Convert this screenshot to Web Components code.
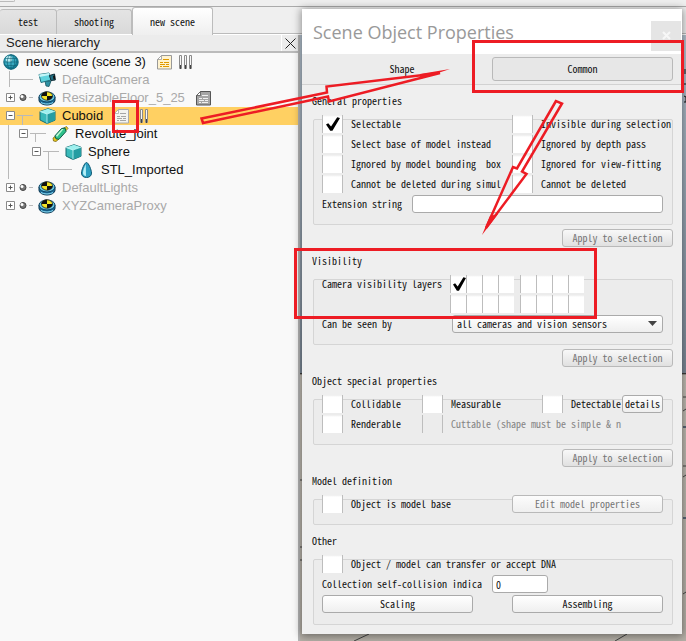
<!DOCTYPE html>
<html lang="en">
<head>
<meta charset="utf-8">
<title>Scene Object Properties</title>
<style>
  html, body { margin: 0; min-height: 100%; }
  body { font-family: "Liberation Sans", Arial, sans-serif; font-size: 13px; color: #111; overflow: hidden;
    --mono: "Noto Sans Mono CJK SC", "Liberation Mono", monospace; --mono-size: 10px; }
</style>
</head>
<body>
<scene-app></scene-app>
<script>
const define = (name, html, setup) => customElements.define(name, class extends HTMLElement {
  connectedCallback() {
    if (this.shadowRoot) return;
    const root = this.attachShadow({ mode: 'open' });
    const t = document.createElement('template');
    t.innerHTML = typeof html === 'function' ? html(this) : html;
    root.append(t.content.cloneNode(true));
    if (setup) setup(this, root);
  }
});

/* ---------- icons ---------- */
const ICONS = {
  globe: [16, 16, `<circle cx="8" cy="8" r="7.5" fill="#177d94"/><circle cx="7.2" cy="7" r="6" fill="#39a9bf"/><circle cx="6" cy="5" r="3.2" fill="#c5f2f6" opacity=".9"/><g fill="none" stroke="#0f5f74" stroke-width=".6"><circle cx="8" cy="8" r="7.3"/><path d="M1 8h14M2.2 4.5h11.6M2.2 11.5h11.6M8 .7v14.6"/><ellipse cx="8" cy="8" rx="3.7" ry="7.3"/></g>`],
  camera: [18, 16, `<path d="M7 9l6 0-2 5.500-3-.5z" fill="#2f91a3" stroke="#16545f" stroke-width=".8"/><path d="M1 2.500L11 1l2 7-10 2.500z" fill="#5fd3dd" stroke="#1d6f7c"/><path d="M1 2.500l10-1.500.5 2L1.500 5z" fill="#c3f6f8"/><path d="M11.500 3.500l5-1.500 .8 6-4.300.5z" fill="#226f83" stroke="#102c36"/><path d="M15 4l2-.8.3 4-1.800.3z" fill="#111"/>`],
  model: [18, 16, `<path d="M1 7v3c0 2.800 3.600 5 8 5s8-2.200 8-5V7z" fill="#1b6f9c" stroke="#0a344f"/><ellipse cx="9" cy="7" rx="8" ry="5" fill="#62c3e2" stroke="#0d405f"/><ellipse cx="9" cy="6" rx="5.500" ry="4.200" fill="#f4e526" stroke="#222" stroke-width=".8"/><path d="M9 6V1.800C6 1.800 3.600 3.500 3.500 6zM9 6v4.200c3 0 5.400-1.700 5.500-4.200z" fill="#111"/><path d="M3 12.500c3 2 9 2 12 0" fill="none" stroke="#8fdcf2"/>`],
  cube: [17, 16, `<path d="M1 3.500L9 .7l7 2.500v9L8 15.500 1 12z" fill="#39b9b9" stroke="#176a70"/><path d="M1 3.500L9 .7l7 2.500L8 6z" fill="#9df0ee"/><path d="M8 6l8-2.800v9L8 15.500z" fill="#259da2"/><path d="M1 3.500L8 6l8-2.800M8 6v9.500" fill="none" stroke="#d7ffff" stroke-width=".7"/>`],
  joint: [17, 16, `<path d="M1 12l3-2 3 3-3 2.500-2.500-.5z" fill="#e7c81f" stroke="#6d5a08" stroke-width=".7"/><path d="M11 2.500L14.500 .5 16 2.500 13.500 5z" fill="#e7d12b" stroke="#6d5a08" stroke-width=".7"/><path d="M2.800 10L9.500 2.500l3.500-.5 1 3.500L7 13.300l-3-.5z" fill="#2ec08a" stroke="#0e5c48"/><path d="M4 9.500L10 3l1.500 0-6.500 8z" fill="#bff7d6"/>`],
  drop: [17, 16, `<path d="M8.500.5C10.500.5 13.500 8 13.500 11c0 3-2.200 4.500-5 4.500s-5-1.500-5-4.500C3.500 8 6.500.5 8.500.5z" fill="#2c9fc0" stroke="#105a74"/><path d="M7.800 2C6.500 5 5 8 5 11c0 2 1.500 3 3 3z" fill="#b5f0f8"/>`],
  sliders: [15, 15, `<g fill="#f7f7f7" stroke="#8b8b8b"><path d="M1.500.5h2v13h-2zM6.500.5h2v13h-2zM11.500.5h2v13h-2z"/></g><path d="M2 10h1v4H2zM7 10h1v4H7zM12 10h1v4h-1z" fill="#444"/>`],
  sliders2: [15, 15, `<g fill="#f7f7f7" stroke="#8b8b8b"><path d="M5.500.5h2v13h-2zM10.500.5h2v13h-2z"/></g><path d="M6 10h1v4H6zM11 10h1v4h-1z" fill="#444"/><path d="M1 10h2v4H1z" fill="#888"/>`]
};
const doc = (bg, ink, edge) => [15, 15, `<path d="M4.500.5h10v13.500H.5V4.500z" fill="${bg}" stroke="${edge}"/><path d="M.5 4.500h4v-4z" fill="#fff" stroke="${edge}" stroke-width=".8"/><path d="M6 4.500h6M3 7.500h3M7 7.500h5M3 9.500h5M9 9.500h3M3 11.500h2M6 11.500h6" stroke="${ink}" fill="none"/>`];
ICONS.script = doc('#fff3cf', '#e09a00', '#999');
ICONS.scriptGrey = doc('#a5a5a5', '#f0f0f0', '#555');
ICONS.scriptLight = doc('#f3f3f0', '#a5a5a5', '#aaa');

define('ui-icon', el => {
  const [w, h, body] = ICONS[el.getAttribute('name')];
  return `<style>:host{display:inline-flex;flex:none} svg{display:block}</style>
  <svg width="${w}" height="${h}" viewBox="0 0 ${w} ${h}" aria-hidden="true">${body}</svg>`;
});

/* ---------- tree ---------- */
/* guide: connector lines and toggles of the row; indent: their total width. */
define('tree-row', el => `
<style>
  :host { display: flex; align-items: center; height: 18px; white-space: nowrap; }
  :host([selected]) { background: #ffd062; }
  :host([dim]) .name { color: #a9a9a9; }
  svg { display: block; flex: none; overflow: visible; }
  .icon { display: flex; justify-content: center; width: 18px; }
  .name { margin-left: 6px; line-height: 18px; }
  .extra { display: flex; align-items: center; gap: 6px; margin-left: 11px; }
</style>
<svg width="${el.getAttribute('indent')}" height="18" fill="none" stroke="#b9b9b9" aria-hidden="true">${guide(el.getAttribute('guide') || '')}</svg>
<span class="icon"><slot name="icon"></slot></span>
<span class="name"><slot></slot></span>
<span class="extra"><slot name="extra"></slot></span>`);

function guide(spec) {
  return spec.split(' ').filter(Boolean).map(s => {
    const [k, ...n] = s.split(',');
    if (k === 'L') return `<path d="M${n[0]} ${n[1]}L${n[2]} ${n[3]}"/>`;
    const x = +n[0];
    if (k === 'B') return `<circle cx="${x}" cy="8.500" r="3" fill="#777" stroke="#444"/><circle cx="${x - 1}" cy="7.500" r="1.500" fill="#fff" stroke="none"/>`;
    return `<path d="M${x}.5 4.500h8v8h-8z" fill="#fff" stroke="#8a8a8a"/><path d="M${x + 2}.5 8.500h4${k === 'P' ? `M${x + 4}.5 6.500v4` : ''}" stroke="#555"/>`;
  }).join('');
}

define('scene-hierarchy', `
<style>
  :host { display: flex; flex-direction: column; width: 298px; flex: none; background: #f9f9f9; }
  header { display: flex; height: 16px; align-items: center; justify-content: space-between; background: #ececec; border-bottom: 2px solid #bbb; color: #222; }
  h2 { margin: 0 0 0 6px; font-size: 13px; font-weight: 400; line-height: 16px; }
  button { width: 17px; height: 16px; border: 0; border-left: 1px solid #fff; padding: 0; background: #ececec; }
  button svg { display: block; margin: 0 auto; }
</style>
<header><h2>Scene hierarchy</h2><button aria-label="Close hierarchy"><svg width="11" height="11" stroke="#222"><path d="M.5.5l10 10M10.500.5l-10 10"/></svg></button></header>
<div>
<tree-row indent="2"><ui-icon slot="icon" name="globe"></ui-icon>new scene (scene 3)<ui-icon slot="extra" name="script"></ui-icon><ui-icon slot="extra" name="sliders"></ui-icon></tree-row>
<tree-row dim indent="38" guide="L,9.5,0,9.5,16 L,9.5,8.5,33,8.5"><ui-icon slot="icon" name="camera"></ui-icon>DefaultCamera</tree-row>
<tree-row dim indent="38" guide="P,6 B,23 L,29,8.5,33,8.5"><ui-icon slot="icon" name="model"></ui-icon>ResizableFloor_5_25<ui-icon slot="extra" name="scriptGrey"></ui-icon></tree-row>
<tree-row selected indent="38" guide="M,6 L,17,8.5,33,8.5 L,22.5,8.5,22.5,18"><ui-icon slot="icon" name="cube"></ui-icon>Cuboid<ui-icon slot="extra" name="scriptLight"></ui-icon><ui-icon slot="extra" name="sliders2"></ui-icon></tree-row>
<tree-row indent="51" guide="L,8.5,0,8.5,18 M,19 L,30,8.5,46,8.5 L,35.5,8.5,35.5,17"><ui-icon slot="icon" name="joint"></ui-icon>Revolute_joint</tree-row>
<tree-row indent="64" guide="L,8.5,0,8.5,18 M,32 L,43,8.5,59,8.5 L,48.5,8.5,48.5,18"><ui-icon slot="icon" name="cube"></ui-icon>Sphere</tree-row>
<tree-row indent="77" guide="L,8.5,0,8.5,18 L,48.5,0,48.5,8.5 L,48.5,8.5,72,8.5"><ui-icon slot="icon" name="drop"></ui-icon>STL_Imported</tree-row>
<tree-row dim indent="38" guide="P,6 B,23 L,29,8.5,33,8.5"><ui-icon slot="icon" name="model"></ui-icon>DefaultLights</tree-row>
<tree-row dim indent="38" guide="P,6 B,23 L,29,8.5,33,8.5"><ui-icon slot="icon" name="model"></ui-icon>XYZCameraProxy</tree-row>
</div>`);

define('scene-tabs', `
<style>
  :host { display: flex; align-items: flex-end; height: 27px; border-bottom: 1px solid #fff; }
  button { box-sizing: border-box; height: 25px; padding: 0; border: 1px solid #bcbcbc; border-width: 1px 1px 0 0; border-radius: 3px 3px 0 0; background: linear-gradient(#e4e4e4, #d9d9d9); font: var(--mono-size)/20px var(--mono); color: #111; }
  .a { width: 57px; } .b { width: 75px; }
  .c { width: 81px; height: 28px; margin-bottom: -1px; border-width: 1px 1px 0; background: linear-gradient(#fff, #efefef); }
  .rest { flex: 1; border-bottom: 1px solid #bbb; }
</style>
<button class="a">test</button><button class="b">shooting</button><button class="c">new scene</button><span class="rest"></span>`);

/* ---------- form parts ---------- */
const CHECK = `
  input { appearance: none; box-sizing: border-box; margin: 0; flex: none; width: 21px; height: 18px; border: 1px solid #bdbdbd; border-width: 0 1px; background: linear-gradient(#ececec, #fff 2px); }
  input:disabled { background: #ececec; }
  input:checked::before { content: ""; display: block; width: 14px; height: 14px; margin: 2px 0 0 3px; background: #000;
    clip-path: polygon(0 54%, 16% 44%, 36% 68%, 80% 2%, 100% 8%, 46% 98%, 30% 98%); }`;

define('check-field', el => `
<style>
  :host { display: block; min-width: 0; }
  label { display: flex; align-items: center; gap: 8px; height: 20px; white-space: nowrap; font: var(--mono-size)/20px var(--mono); }
  :host([disabled]) label { color: #858585; }
  ${CHECK}
</style>
<label><input type="checkbox" ${el.hasAttribute('checked') ? 'checked' : ''} ${el.hasAttribute('disabled') ? 'disabled' : ''}><span><slot></slot></span></label>`);

define('push-button', el => `
<style>
  :host { display: block; }
  button { display: block; box-sizing: border-box; width: 100%; height: 18px; padding: 0; border: 1px solid #aaa; border-radius: 3px; background: linear-gradient(#fff, #efefef); font: var(--mono-size)/16px var(--mono); color: #111; white-space: nowrap; }
  button:disabled { color: #777; border-color: #b9b9b9; background: linear-gradient(#f8f8f8, #e0e0e0); }
  :host([light]) button { background: linear-gradient(#fcfcfc, #efefef); }
  :host([tab]) button { height: 24px; border-color: #b9b9b9; background: #e7e7e7; line-height: 22px; }
</style>
<button ${el.hasAttribute('disabled') ? 'disabled' : ''}><slot></slot></button>`);

define('property-group', `
<style>
  :host { display: block; }
  h3 { margin: 0 0 8px; font: var(--mono-size)/20px var(--mono); }
  .box { margin-left: 1px; border: 1px solid #d5d5d5; border-radius: 2px; padding: 0 9px 10px 8px; background: #ececec; }
  .rows { display: grid; margin-top: -6px; }
  .foot { display: flex; justify-content: flex-end; padding: 2px 0 4px; }
  ::slotted([slot=action]) { width: 111px; margin-top: 2px; }
</style>
<h3><slot name="title"></slot></h3>
<div class="box"><div class="rows"><slot></slot></div></div>
<div class="foot"><slot name="action"></slot></div>`);

define('layer-grid', el => `
<style>
  :host { display: flex; gap: 6px; }
  div { display: grid; grid-template-columns: repeat(4, 16px); grid-auto-rows: 20px; align-items: center; }
  ${CHECK}
  input { width: 16px; border-right-width: 0; }
  input:checked::before { margin-left: 2px; width: 13px; }
</style>` + [0, 1].map(b => '<div>' + Array.from({ length: 8 }, (_, i) =>
  `<input type="checkbox" aria-label="Layer ${b * 4 + (i >> 2) * 8 + i % 4 + 1}" ${b + i === 0 ? 'checked' : ''}>`).join('') + '</div>').join(''));

define('properties-dialog', `
<style>
  :host { display: block; background: #efefef; box-shadow: 0 1px 8px 1px rgba(0,0,0,.42); color: #111; }
  header { display: flex; height: 45px; background: #fff; justify-content: space-between; align-items: center; }
  h1 { margin: 0 0 0 11px; font: 400 18px/44px "Open Sans", "Noto Sans", sans-serif; color: #999; white-space: nowrap; }
  .x { width: 30px; height: 30px; margin: 8px 1px 0 0; padding: 0; border: 0; background: #e5e5e5; }
  .x svg { display: block; margin: 0 auto; }
  nav { display: grid; grid-template-columns: 1fr 181px; align-items: center; height: 30px; padding: 0 9px 0 10px; border-bottom: 1px solid #d2d2d2; background: #ececec; }
  nav a { justify-self: center; color: inherit; text-decoration: none; font: var(--mono-size)/22px var(--mono); }
  main { padding: 6px 9px 3px 10px; }
  .two { display: grid; grid-template-columns: 190fr 151fr; }
  .line { display: flex; align-items: center; height: 20px; font: var(--mono-size)/20px var(--mono); white-space: nowrap; }
  .text { box-sizing: border-box; height: 18px; border: 1px solid #aaa; border-radius: 3px; padding: 0 3px; background: #fff; font: var(--mono-size)/16px var(--mono); color: #111; min-width: 0; }
  .ext { flex: 1; margin-left: 10px; }
  .ext-label { width: 80px; } .seen-label { width: 130px; }
  .layers { display: flex; line-height: 20px; }
  .layers span { width: 128px; font: var(--mono-size)/20px var(--mono); white-space: nowrap; }
  .pick { position: relative; flex: 1; display: flex; }
  select { appearance: none; box-sizing: border-box; width: 100%; height: 18px; border: 1px solid #aaa; border-radius: 3px; padding: 0 20px 0 4px; background: linear-gradient(#fff, #eee); font: var(--mono-size)/16px var(--mono); color: #111; }
  .pick svg { position: absolute; right: 6px; top: 6px; pointer-events: none; }
  .special { display: grid; grid-template-columns: 100fr 120fr 80fr 41fr; align-items: center; }
  .special .cut { grid-column: 2 / 5; }
  .coll-label { width: 170px; } .num { width: 56px; }
  .pair { display: grid; grid-template-columns: 151fr 151fr; gap: 39px; align-items: center; height: 20px; }
  .base { display: grid; grid-template-columns: 190fr 151fr; align-items: center; }
</style>
<header><h1>Scene Object Properties</h1><button class="x" aria-label="Close"><svg width="9" height="9" stroke="#f7f7f7" stroke-width="2"><path d="M1 1l7 7M8 1L1 8"/></svg></button></header>
<nav><a href="#shape">Shape</a><push-button tab>Common</push-button></nav>
<main>
<property-group><span slot="title">General properties</span>
  <div class="two">
    <check-field checked>Selectable</check-field><check-field>Invisible during selection</check-field>
    <check-field>Select base of model instead</check-field><check-field>Ignored by depth pass</check-field>
    <check-field>Ignored by model bounding&nbsp; box</check-field><check-field>Ignored for view-fitting</check-field>
    <check-field>Cannot be deleted during simul</check-field><check-field>Cannot be deleted</check-field>
  </div>
  <div class="line"><label class="ext-label" for="ext">Extension string</label><input id="ext" class="text ext" type="text"></div>
  <push-button slot="action" disabled>Apply to selection</push-button>
</property-group>
<property-group><span slot="title">Visibility</span>
  <div class="layers"><span>Camera visibility layers</span><layer-grid></layer-grid></div>
  <div class="line"><label class="seen-label" for="seen">Can be seen by</label><span class="pick"><select id="seen"><option>all cameras and vision sensors</option></select><svg width="9" height="5"><path d="M0 0h9L4.500 5z" fill="#444"/></svg></span></div>
  <push-button slot="action" disabled>Apply to selection</push-button>
</property-group>
<property-group><span slot="title">Object special properties</span>
  <div class="special">
    <check-field>Collidable</check-field><check-field>Measurable</check-field><check-field>Detectable</check-field><push-button light>details</push-button>
    <check-field>Renderable</check-field><check-field class="cut" disabled>Cuttable (shape must be simple &amp; n</check-field>
  </div>
  <push-button slot="action" disabled>Apply to selection</push-button>
</property-group>
<property-group><span slot="title">Model definition</span>
  <div class="base"><check-field>Object is model base</check-field><push-button light disabled>Edit model properties</push-button></div>
</property-group>
<property-group><span slot="title">Other</span>
  <check-field>Object / model can transfer or accept DNA</check-field>
  <div class="line"><label class="coll-label" for="coll">Collection self-collision indica</label><input id="coll" class="text num" type="text" value="0"></div>
  <div class="pair"><push-button>Scaling</push-button><push-button>Assembling</push-button></div>
</property-group>
</main>`);

/* Red frames and arrows drawn over the windows. */
define('red-marks', `
<style>:host { display: block; pointer-events: none; } svg { display: block; }</style>
<svg width="686" height="641" fill="none" stroke="#ed1c24" stroke-width="3" aria-hidden="true">
  <path d="M113.500 101.500h24v30h-24zM473.500 41.500h209v50h-209zM295.500 249.500h300v68h-300z"/>
  <g stroke-width="2.500" stroke-miterlimit="3">
    <path d="M201.500 118.500L327 92.500 326.500 86.500 440 73 329 101.500 328 96.500 203 123z"/>
    <path d="M556 101L517 168.500 513 167 486 228 526.500 174 522 171.500 562 103.500z"/>
  </g>
  <path fill="#ed1c24" stroke="none" d="M420 74L450 69 420 79zM490 216L482 235 498 214z"/>
</svg>`);

define('scene-app', `
<style>
  :host { display: flex; flex-direction: column; position: relative; min-height: 100vh; background: #efefef; overflow: hidden; }
  .bar { height: 6px; background: #efefef; border-bottom: 1px solid #aaa; }
  .bar i { display: block; width: 14px; height: 1px; border: 1px solid #bbb; border-width: 0 1px 1px 0; border-radius: 0 0 3px 0; }
  .work { display: flex; flex: 1; }
  .view { flex: 1; border-left: 2px solid #b5b5b5; background: linear-gradient(#b4c2cf, #7b8896 338px, #111 338px, #c2bdb4 340px, #b5b0a7); }
  .view svg { display: block; width: 100%; height: 606px; }
  properties-dialog { position: absolute; left: 302px; right: 4px; top: 9px; }
  red-marks { position: absolute; left: 0; top: 0; }
</style>
<div class="bar"><i></i></div>
<scene-tabs></scene-tabs>
<div class="work"><scene-hierarchy></scene-hierarchy>
<div class="view"><svg viewBox="300 35 386 606" preserveAspectRatio="none" fill="none" stroke="#444"><path d="M354 641l15-7M615 641l12-7M683 397h3M683 411l3-2M683 466h3M683 477l3-2M683 594l3-2M300 480h2M300 547h2M300 560h2"/><path d="M683 518h3M683 427h3" stroke="#596575" stroke-width="2"/><path d="M685 69v5M684 84h2M684 96l2 1v5h-2" stroke="#111"/></svg></div></div>
<properties-dialog></properties-dialog>
<red-marks></red-marks>`);
</script>
</body>
</html>
